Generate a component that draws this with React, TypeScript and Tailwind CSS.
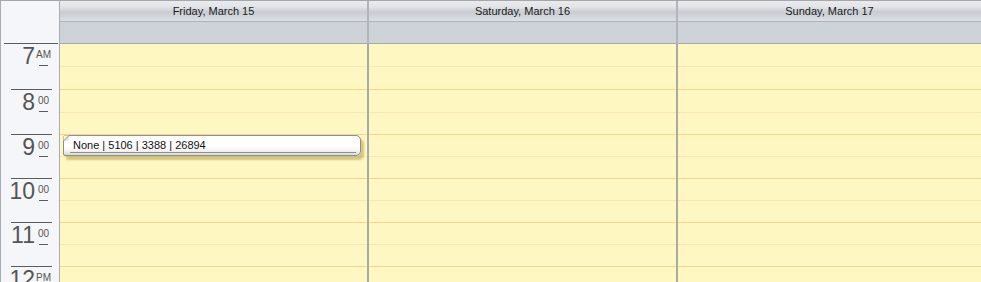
import React from "react";

const hours = [
  { n: "7", s: "AM", h: "h-[46px]", first: true },
  { n: "8", s: "00", h: "h-[45px]" },
  { n: "9", s: "00", h: "h-[44px]" },
  { n: "10", s: "00", h: "h-[44px]" },
  { n: "11", s: "00", h: "h-[44px]" },
  { n: "12", s: "PM", h: "h-[44px]" },
];

const slots = [
  ["h-[22px]", "h-[22px]"],
  ["h-[22px]", "h-[21px]"],
  ["h-[21px]", "h-[21px]"],
  ["h-[21px]", "h-[21px]"],
  ["h-[21px]", "h-[21px]"],
  ["h-[21px]", "h-[21px]"],
];

function TimeColumn() {
  return (
    <div className="w-[60px] shrink-0 border-l border-r border-[#a9acb2] bg-[#f5f6f9] flex flex-col">
      <div className="h-[42px] shrink-0" />
      {hours.map((hr) => (
        <div key={hr.n} className={`${hr.h} shrink-0 flex flex-col`}>
          <div
            className={
              hr.first
                ? "ml-[3px] mr-[1px] h-px bg-[#5c5c5c]"
                : "ml-[10px] mr-[7px] h-px bg-[#5c5c5c]"
            }
          />
          <div className="flex flex-row pt-[1px]">
            <div className="w-[34px] text-right text-[23px] leading-[23px] text-[#555]">
              {hr.n}
            </div>
            <div className="w-[16px] flex flex-col items-center pt-[5px] pl-[1px]">
              <div className="text-[10px] leading-[10px] text-[#555]">{hr.s}</div>
              <div className="mt-[5px] w-[9px] h-px bg-[#5c5c5c]" />
            </div>
          </div>
        </div>
      ))}
    </div>
  );
}

function DayColumn({
  title,
  widthClass,
  children,
}: {
  title: string;
  widthClass: string;
  children?: React.ReactNode;
}) {
  return (
    <div className={`${widthClass} flex flex-col`}>
      <div className="h-[20px] shrink-0 bg-[linear-gradient(to_bottom,#e9ebee_0%,#e2e4e8_30%,#c9ccd2_55%,#d3d6db_80%,#dcdfe3_100%)] flex items-center justify-center text-[11px] text-[#1a1a1a]">
        {title}
      </div>
      <div className="h-px shrink-0 bg-[#aeb2b9]" />
      <div className="h-[21px] shrink-0 bg-[#ced2d9]" />
      <div className="h-px shrink-0 bg-[#a4a8b0]" />
      <div className="relative flex flex-col bg-[#fff7c1]">
        {slots.map((s, i) => (
          <div key={i} className="flex flex-col shrink-0">
            <div className={`${s[0]} shrink-0`} />
            <div className="h-px shrink-0 bg-[#f8e8b0]" />
            <div className={`${s[1]} shrink-0`} />
            <div className="h-px shrink-0 bg-[#f2d68f]" />
          </div>
        ))}
        {children}
      </div>
    </div>
  );
}

function Divider() {
  return (
    <div className="w-[2px] shrink-0 flex flex-col">
      <div className="h-[43px] shrink-0 bg-[#b1b4ba]" />
      <div className="flex-1 bg-[#a9a9a9]" />
    </div>
  );
}

function Appointment() {
  return (
    <div className="absolute left-[3px] top-[91px] w-[298px] h-[21px] rounded-r-[5px] rounded-l-[2px] border border-[#8f8f8f] bg-[linear-gradient(to_bottom,#ffffff_0%,#ffffff_55%,#f1f1f1_80%,#d9d9d9_100%)] shadow-[3px_4px_2px_rgba(160,140,50,0.45)]">
      <svg className="absolute left-[-1px] top-[-1px]" width="7" height="7" viewBox="0 0 7 7">
        <path d="M0.5 0.5 L6 0.5 L0.5 6 Z" fill="#fff7c1" />
        <path d="M0.5 6 L6 0.5 L6 6 Z" fill="#e9e9e9" />
        <path d="M0.5 6 L6 0.5" stroke="#8f8f8f" strokeWidth="1" />
      </svg>
      <div className="absolute left-[9px] top-[3px] text-[11px] leading-[13px] text-[#111]">
        None | 5106 | 3388 | 26894
      </div>
      <div className="absolute left-[6px] right-[4px] top-[16px] h-px bg-[#8f8f8f]" />
    </div>
  );
}

export default function App() {
  return (
    <div
      className="w-[981px] h-[282px] overflow-hidden bg-white"
      style={{ fontFamily: '"Liberation Sans", Arial, sans-serif' }}
    >
      <div className="h-px bg-[#a5a7ab]" />
      <div className="flex flex-row h-[281px]">
        <TimeColumn />
        <DayColumn title="Friday, March 15" widthClass="w-[307px] shrink-0">
          <Appointment />
        </DayColumn>
        <Divider />
        <DayColumn title="Saturday, March 16" widthClass="w-[307px] shrink-0" />
        <Divider />
        <DayColumn title="Sunday, March 17" widthClass="flex-1 min-w-0" />
      </div>
    </div>
  );
}
